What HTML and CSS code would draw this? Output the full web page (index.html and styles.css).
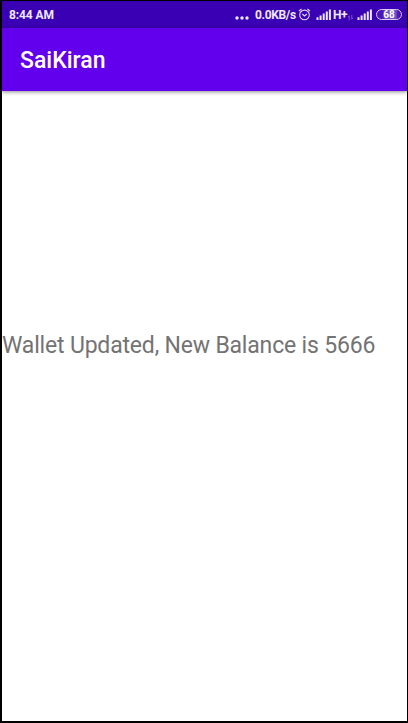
FILE: index.html
```html
<!DOCTYPE html>
<html lang="en">
<head>
<meta charset="utf-8">
<title>SaiKiran</title>
<link rel="stylesheet" href="styles.css">
</head>
<body>
<div class="screen">
  <div class="status-bar">
    <span class="time">8:44 AM</span>
    <svg class="dots" width="14" height="12" viewBox="0 0 14 12"><circle cx="2" cy="9" r="1.7"/><circle cx="7" cy="9" r="1.7"/><circle cx="12" cy="9" r="1.7"/></svg>
    <span class="speed">0.0KB/s</span>
    <svg class="alarm" width="13" height="13" viewBox="0 0 13 13"><circle cx="6.5" cy="6.9" r="4.8"/><path d="M.9 3.2 3.5 1M12.1 3.2 9.5 1M4.2 6l2.3 2 2.4-2"/></svg>
    <svg class="signal" width="16" height="11" viewBox="0 0 16 11"><path d="M.5 8.2h2V11h-2zM3.6 6.6h2V11h-2zM6.7 4.6h2V11h-2zM9.8 2.4h2V11h-2zM12.9.5h2V11h-2z"/></svg>
    <span class="network">H+</span>
    <svg class="data" width="5" height="5" viewBox="0 0 5 5"><path d="M1.2 5V.8L.2 1.8M3.8 0v4.2l1-1"/></svg>
    <svg class="signal" width="16" height="11" viewBox="0 0 16 11"><path d="M.5 8.2h2V11h-2zM3.6 6.6h2V11h-2zM6.7 4.6h2V11h-2zM9.8 2.4h2V11h-2zM12.9.5h2V11h-2z"/></svg>
    <span class="battery">68</span>
  </div>
  <header class="app-bar"><h1 class="title">SaiKiran</h1></header>
  <main class="content"><p class="message">Wallet Updated, New Balance is 5666</p></main>
</div>
</body>
</html>
```

FILE: styles.css
```css
* { box-sizing: border-box; }
body { margin: 0; background: #000; font-family: Roboto, "Liberation Sans", sans-serif; }
.screen {
  width: 408px;
  height: 723px;
  border: solid #000;
  border-width: 1px 1px 2px 2px;
  background: #fff;
  display: flex;
  flex-direction: column;
  overflow: hidden;
}
.status-bar {
  height: 27px;
  flex: none;
  display: flex;
  align-items: center;
  padding: 0 6px 0 7px;
  background: #3a00b4;
  color: #eee8fa;
  font-size: 12px;
  font-weight: 700;
  white-space: nowrap;
}
.status-bar svg { flex: none; fill: #eee8fa; }
.time { width: 226px; flex: none; letter-spacing: -.1px; }
.status-bar .dots { margin-right: 6px; }
.speed { width: 43px; flex: none; letter-spacing: -.35px; }
.status-bar .alarm { fill: none; stroke: #e2d8f6; stroke-width: 1.1; margin: 0 5px 0 0; }
.network { width: 15px; flex: none; margin-left: 1px; letter-spacing: -.35px; }
.status-bar .data { fill: none; stroke: #8f6bd5; stroke-width: .8; margin: 5px 4px 0 0; }
.battery {
  width: 26px;
  flex: none;
  height: 11px;
  margin-left: 3px;
  border: 1px solid #d8cdf0;
  border-radius: 5.5px;
  background: linear-gradient(90deg, #4a16b8 22%, #7450c6 35%, #7450c6 80%, #4a16b8 86%);
  color: #fff;
  font-size: 10px;
  line-height: 10px;
  text-align: center;
}
.app-bar {
  height: 63px;
  flex: none;
  display: flex;
  align-items: center;
  padding: 2px 18px 0;
  background: #6200ee;
  box-shadow: 0 1px 4px rgba(0, 0, 0, .45);
}
.title { margin: 0; color: #fff; font-size: 23px; font-weight: 500; line-height: 28px; }
.content { flex: 1; display: flex; align-items: flex-start; padding-top: 240px; }
.message { margin: 0; color: #737373; font-size: 23px; letter-spacing: -.18px; line-height: 30px; white-space: nowrap; }
```
